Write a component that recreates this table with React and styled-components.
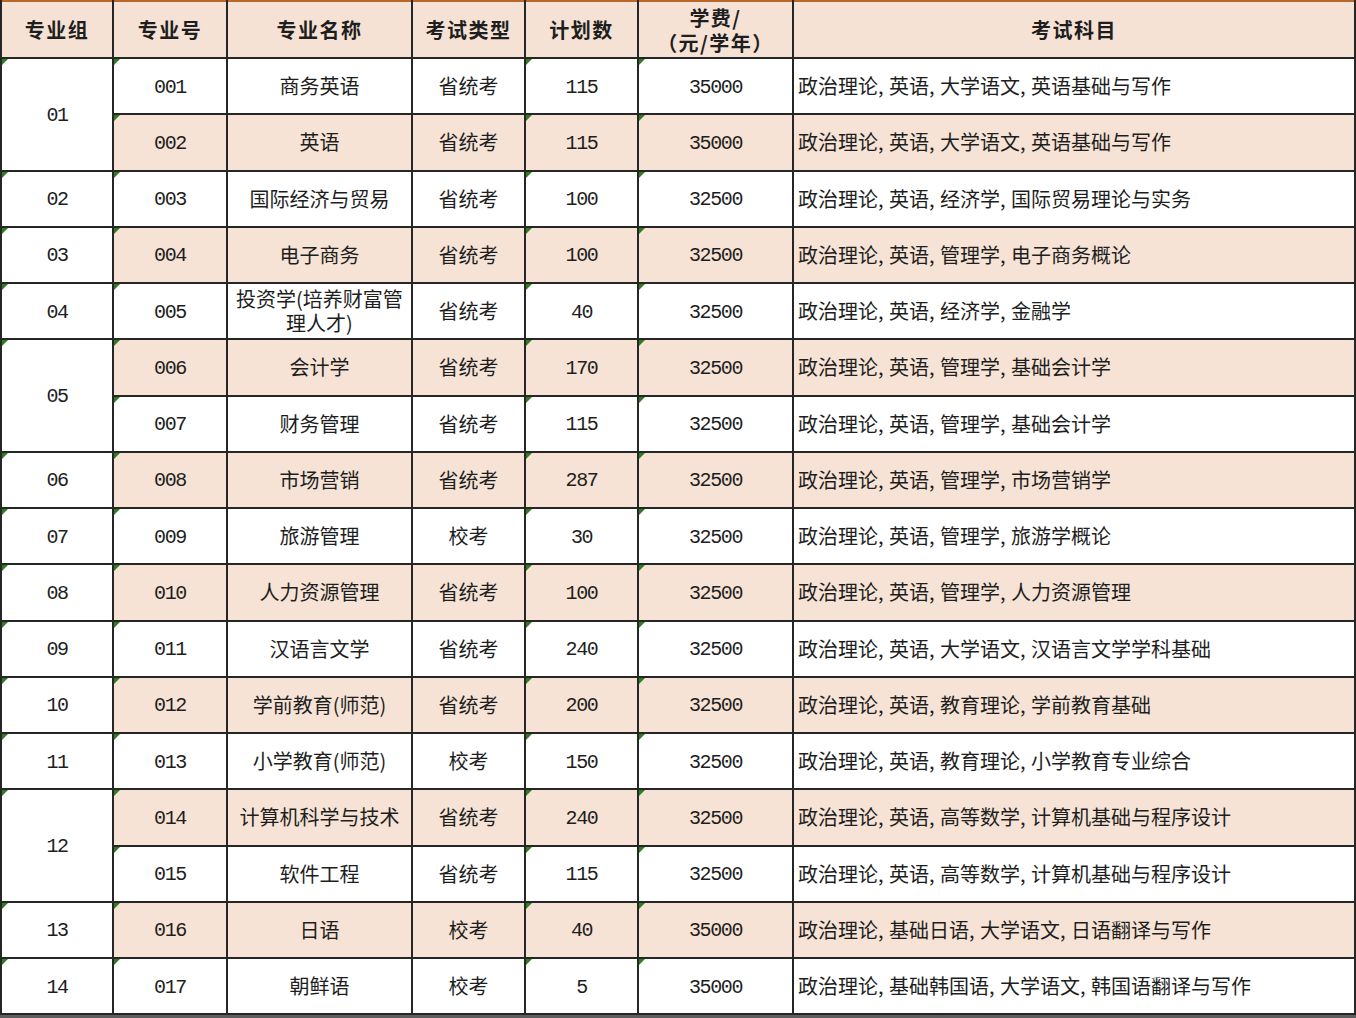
import React from "react";
import styled, { createGlobalStyle, css } from "styled-components";

const Global = createGlobalStyle`
  html, body { margin: 0; padding: 0; background: #ffffff; }
  body { font-family: "Noto Sans CJK SC", "Noto Sans", sans-serif; color: #1b1b1b; }
`;

const Frame = styled.div`
  width: 1356px;
  height: 1018px;
  overflow: hidden;
  background: #5e5e5e;
`;

const Sheet = styled.table`
  width: 1354px;
  margin-left: 0;
  table-layout: fixed;
  border-collapse: collapse;
  border-top: 2px solid #b8682a;
  background: #ffffff;
`;

const HeadRow = styled.tr`
  height: 57px;
`;

const BodyRow = styled.tr`
  height: 56.25px;
`;

const HeadCell = styled.th`
  border: 2px solid #262626;
  border-top: none;
  background: #f5e2d4;
  font-family: "Noto Sans CJK SC", sans-serif;
  font-weight: 700;
  font-size: 20px;
  line-height: 25px;
  letter-spacing: 1.5px;
  color: #1e1e1e;
  text-align: center;
  vertical-align: middle;
  padding: 0;
`;

const Cell = styled.td`
  position: relative;
  border: 2px solid #262626;
  background: ${(p) => (p.$shade ? "#f6e3d5" : "#ffffff")};
  font-family: ${(p) =>
    p.$num ? '"Liberation Mono", "DejaVu Sans Mono", monospace' : '"Noto Sans CJK SC", sans-serif'};
  font-size: ${(p) => (p.$num ? "20px" : "20px")};
  letter-spacing: ${(p) => (p.$num ? "-1.4px" : "0")};
  line-height: 24px;
  color: #1e1e1e;
  text-align: ${(p) => (p.$left ? "left" : "center")};
  padding: ${(p) => (p.$left ? "0 0 0 4px" : p.$num ? "3px 0 0 0" : "0")};
  vertical-align: middle;
  white-space: nowrap;
  ${(p) =>
    p.$tick &&
    css`
      &::before {
        content: "";
        position: absolute;
        left: 0;
        top: 0;
        width: 0;
        height: 0;
        border-top: 6px solid #2e7d1f;
        border-right: 6px solid transparent;
      }
    `}
`;

const Sep = styled.span`
  display: inline-block;
  width: 11px;
`;

const Subjects = ({ text }) => {
  const parts = text.split(",");
  return parts.map((p, i) => (
    <React.Fragment key={i}>
      {p}
      {i < parts.length - 1 && <Sep>,</Sep>}
    </React.Fragment>
  ));
};

const groups = [
  ["01", [
    ["001", "商务英语", "省统考", "115", "35000", "政治理论,英语,大学语文,英语基础与写作"],
    ["002", "英语", "省统考", "115", "35000", "政治理论,英语,大学语文,英语基础与写作"],
  ]],
  ["02", [["003", "国际经济与贸易", "省统考", "100", "32500", "政治理论,英语,经济学,国际贸易理论与实务"]]],
  ["03", [["004", "电子商务", "省统考", "100", "32500", "政治理论,英语,管理学,电子商务概论"]]],
  ["04", [["005", "投资学(培养财富管|理人才)", "省统考", "40", "32500", "政治理论,英语,经济学,金融学"]]],
  ["05", [
    ["006", "会计学", "省统考", "170", "32500", "政治理论,英语,管理学,基础会计学"],
    ["007", "财务管理", "省统考", "115", "32500", "政治理论,英语,管理学,基础会计学"],
  ]],
  ["06", [["008", "市场营销", "省统考", "287", "32500", "政治理论,英语,管理学,市场营销学"]]],
  ["07", [["009", "旅游管理", "校考", "30", "32500", "政治理论,英语,管理学,旅游学概论"]]],
  ["08", [["010", "人力资源管理", "省统考", "100", "32500", "政治理论,英语,管理学,人力资源管理"]]],
  ["09", [["011", "汉语言文学", "省统考", "240", "32500", "政治理论,英语,大学语文,汉语言文学学科基础"]]],
  ["10", [["012", "学前教育(师范)", "省统考", "200", "32500", "政治理论,英语,教育理论,学前教育基础"]]],
  ["11", [["013", "小学教育(师范)", "校考", "150", "32500", "政治理论,英语,教育理论,小学教育专业综合"]]],
  ["12", [
    ["014", "计算机科学与技术", "省统考", "240", "32500", "政治理论,英语,高等数学,计算机基础与程序设计"],
    ["015", "软件工程", "省统考", "115", "32500", "政治理论,英语,高等数学,计算机基础与程序设计"],
  ]],
  ["13", [["016", "日语", "校考", "40", "35000", "政治理论,基础日语,大学语文,日语翻译与写作"]]],
  ["14", [["017", "朝鲜语", "校考", "5", "35000", "政治理论,基础韩国语,大学语文,韩国语翻译与写作"]]],
];

const widths = [112, 114, 185, 113, 113, 155, 562];

const Name = ({ text }) => {
  const lines = text.split("|");
  return lines.map((l, i) => (
    <React.Fragment key={i}>
      {i > 0 && <br />}
      {l}
    </React.Fragment>
  ));
};

export default function App() {
  let idx = 0;
  const rows = [];
  groups.forEach(([g, items]) => {
    items.forEach((it, j) => {
      const shade = idx % 2 === 1;
      idx += 1;
      rows.push(
        <BodyRow key={it[0]}>
          {j === 0 && (
            <Cell $num $tick rowSpan={items.length}>
              {g}
            </Cell>
          )}
          <Cell $num $tick $shade={shade}>{it[0]}</Cell>
          <Cell $shade={shade}><Name text={it[1]} /></Cell>
          <Cell $shade={shade}>{it[2]}</Cell>
          <Cell $num $tick $shade={shade}>{it[3]}</Cell>
          <Cell $num $tick $shade={shade}>{it[4]}</Cell>
          <Cell $left $shade={shade}><Subjects text={it[5]} /></Cell>
        </BodyRow>
      );
    });
  });

  return (
    <>
      <Global />
      <Frame>
        <Sheet>
          <colgroup>
            {widths.map((w, i) => (
              <col key={i} style={{ width: w }} />
            ))}
          </colgroup>
          <thead>
            <HeadRow>
              <HeadCell>专业组</HeadCell>
              <HeadCell>专业号</HeadCell>
              <HeadCell>专业名称</HeadCell>
              <HeadCell>考试类型</HeadCell>
              <HeadCell>计划数</HeadCell>
              <HeadCell>学费/<br />（元/学年）</HeadCell>
              <HeadCell>考试科目</HeadCell>
            </HeadRow>
          </thead>
          <tbody>{rows}</tbody>
        </Sheet>
      </Frame>
    </>
  );
}
